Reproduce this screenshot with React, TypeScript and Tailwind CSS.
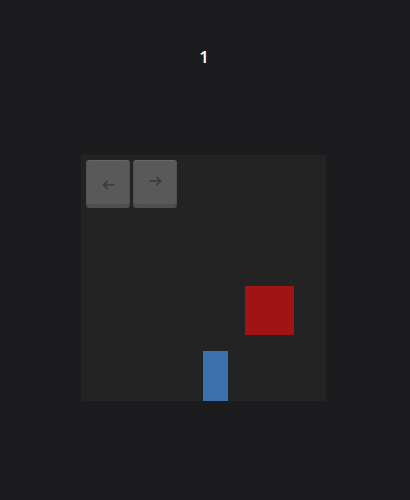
import React, { useState } from 'react';

const Arrow: React.FC<{ dir: 'left' | 'right' }> = ({ dir }) => (
  <svg width="13" height="10" viewBox="0 0 13 10" fill="none" stroke="#3a3a3a" strokeWidth="1.7" strokeLinecap="round" strokeLinejoin="round">
    {dir === 'left' ? (
      <path d="M12 5H1.5M5 1.5L1.5 5 5 8.5" />
    ) : (
      <path d="M1 5h10.5M8 1.5L11.5 5 8 8.5" />
    )}
  </svg>
);

const App: React.FC = () => {
  const [score] = useState(1);
  const [playerX, setPlayerX] = useState(122);

  const move = (dx: number) => setPlayerX((x) => Math.min(Math.max(x + dx, 0), 220));

  const keyClass =
    'w-[44px] h-[48px] rounded-[3px] bg-[#595959] flex items-center justify-center shadow-[inset_0_-4px_0_rgba(0,0,0,0.12),inset_1px_0_0_rgba(0,0,0,0.08),inset_-1px_0_0_rgba(0,0,0,0.08),inset_0_1px_0_rgba(255,255,255,0.08)]';

  return (
    <div className="min-h-[500px] w-full bg-[#1c1c1e] flex flex-col items-center font-['Open_Sans',sans-serif]">
      <div className="mt-[45px] ml-[-2px] h-[24px] text-white text-[17px] font-semibold leading-[24px]">{score}</div>
      <div className="relative mt-[86px] ml-[-3px] w-[245px] h-[246px] bg-[#232323]">
        <div className="flex gap-[3px] p-[5px]">
          <button onClick={() => move(-25)} className={`${keyClass} pt-[1px]`}>
            <Arrow dir="left" />
          </button>
          <button onClick={() => move(25)} className={`${keyClass} pb-[7px]`}>
            <Arrow dir="right" />
          </button>
        </div>
        {/* falling block */}
        <div className="absolute left-[164px] top-[131px] w-[49px] h-[49px] bg-[#a11415]" />
        {/* player */}
        <div className="absolute bottom-0 w-[25px] h-[50px] bg-[#3b72ad]" style={{ left: playerX }} />
      </div>
    </div>
  );
};

export default App;
